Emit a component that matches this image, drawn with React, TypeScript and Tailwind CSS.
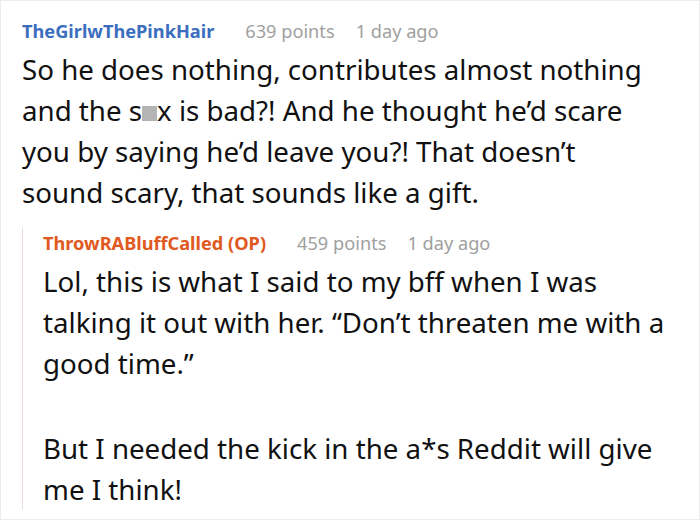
import React from "react";

type MetaProps = {
  user: string;
  userColor: string;
  points: number;
  time: string;
};

function Meta({ user, userColor, points, time }: MetaProps) {
  return (
    <div className="flex items-baseline text-[18.2px] leading-[24px] whitespace-nowrap">
      <span className={`font-bold ${userColor}`}>{user}</span>
      <span className="text-[#a0a0a0] ml-[31px]">{points} points</span>
      <span className="text-[#a0a0a0] ml-[21px]">{time}</span>
    </div>
  );
}

function App() {
  return (
    <div
      className="w-[700px] h-[520px] bg-white border border-[#ececec] overflow-hidden"
      style={{ fontFamily: '"Noto Sans", "Open Sans", sans-serif' }}
    >
      <div className="pl-[21px] pt-[18px]">
        <Meta user="TheGirlwThePinkHair" userColor="text-[#3c6ebf]" points={639} time="1 day ago" />
        <p className="text-[27.7px] leading-[41px] text-[#111] mt-[6px] whitespace-nowrap">
          So he does nothing, contributes almost nothing
          <br />
          and the s
          <span className="inline-block w-[15px] h-[15px] bg-[#b4b4b4] align-[0px]" />
          x is bad?! And he thought he’d scare
          <br />
          you by saying he’d leave you?! That doesn’t
          <br />
          sound scary, that sounds like a gift.
        </p>
        <div className="mt-[15px] border-l-[1.5px] border-[#eadcdc] pl-[20px] pt-[3px]">
          <Meta
            user="ThrowRABluffCalled (OP)"
            userColor="text-[#e0591f]"
            points={459}
            time="1 day ago"
          />
          <div className="text-[27.7px] leading-[41px] text-[#111] mt-[6px] whitespace-nowrap">
            <p>
              Lol, this is what I said to my bff when I was
              <br />
              talking it out with her. “Don’t threaten me with a
              <br />
              good time.”
            </p>
            <p className="mt-[44px]">
              But I needed the kick in the a*s Reddit will give
              <br />
              me I think!
            </p>
          </div>
        </div>
      </div>
    </div>
  );
}

export default App;
